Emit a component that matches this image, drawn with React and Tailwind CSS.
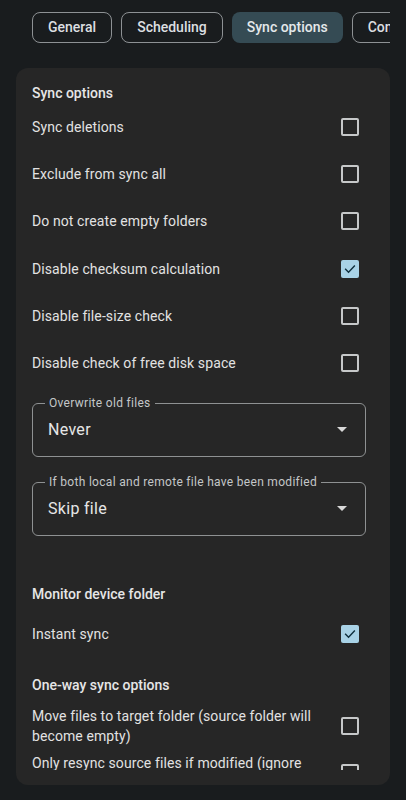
import React from "react";

function Check({ checked }) {
  if (checked) {
    return (
      <div className="w-[18px] h-[18px] rounded-[2px] bg-[#a8d2e6] flex items-center justify-center shrink-0">
        <svg width="14" height="14" viewBox="0 0 24 24" fill="none" stroke="#0e2f3d" strokeWidth="2.4" strokeLinecap="square">
          <path d="M4.5 12.5 L9.5 17.5 L19.5 7" />
        </svg>
      </div>
    );
  }
  return <div className="w-[18px] h-[18px] rounded-[2px] border-2 border-[#c6c8c9] shrink-0" />;
}

function Row({ label, checked, h = "h-[47.3px]" }) {
  return (
    <div className={`flex items-center ${h}`}>
      <div className="flex-1 text-[14px] leading-5 text-[#e2e2e2] tracking-[0.1px]">{label}</div>
      <div className="ml-2 mr-[15px]">
        <Check checked={checked} />
      </div>
    </div>
  );
}

function Select({ label, value, className = "" }) {
  return (
    <div className={`relative mr-2 h-[54px] rounded-[6px] border border-[#8e9192] flex items-center pl-[15px] pr-[18px] ${className}`}>
      <div className="absolute -top-[9px] left-3 px-1 bg-[#262626] text-[12px] leading-4 text-[#c4c7c8] tracking-[0.3px]">{label}</div>
      <div className="flex-1 text-[16px] leading-6 text-[#e6e6e6] tracking-[0.3px]">{value}</div>
      <svg width="10" height="5" viewBox="0 0 10 5">
        <path d="M0 0 L10 0 L5 5 Z" fill="#d8d8d8" />
      </svg>
    </div>
  );
}

export default function App() {
  const tabs = ["General", "Scheduling", "Sync options", "Conditions"];
  return (
    <div className="w-[406px] h-[800px] bg-[#191c1e] overflow-hidden flex flex-col" style={{ fontFamily: "Roboto, 'Noto Sans', sans-serif" }}>
      <div className="px-4 pt-3">
        <div className="overflow-hidden">
          <div className="flex gap-[9px] pl-4 w-max">
            {tabs.map((t, i) => (
              <div
                key={t}
                className={
                  i === 2
                    ? "h-[31px] px-[15px] rounded-[8px] bg-[#354b54] flex items-center text-[14px] font-medium text-[#e4e8ea]"
                    : "h-[31px] px-[15px] rounded-[8px] border border-[#8d9194] flex items-center text-[14px] font-medium text-[#dcdfe1]"
                }
              >
                {t}
              </div>
            ))}
          </div>
        </div>
      </div>

      <div className="mx-4 mt-[25px] h-[717px] rounded-xl bg-[#262626] pb-[15px] flex flex-col">
        <div className="flex-1 overflow-hidden px-4 pt-[15px]">
          <div className="h-5 text-[14px] leading-5 font-medium text-[#e6e6e6]">Sync options</div>
          <Row label="Sync deletions" />
          <Row label="Exclude from sync all" />
          <Row label="Do not create empty folders" />
          <Row label="Disable checksum calculation" checked />
          <Row label="Disable file-size check" />
          <Row label="Disable check of free disk space" />

          <Select className="mt-4" label="Overwrite old files" value="Never" />
          <Select className="mt-[25px]" label="If both local and remote file have been modified" value="Skip file" />

          <div className="mt-[48px] h-5 text-[14px] leading-5 font-medium text-[#e6e6e6]">Monitor device folder</div>
          <div className="mt-[7px]">
            <Row label="Instant sync" checked h="h-[47px]" />
          </div>

          <div className="mt-[17px] h-5 text-[14px] leading-5 font-medium text-[#e6e6e6]">One-way sync options</div>
          <div className="mt-[11px]">
            <Row label="Move files to target folder (source folder will become empty)" h="h-10" />
          </div>
          <div className="mt-[7px]">
            <Row label="Only resync source files if modified (ignore deleted target files)" h="h-10" />
          </div>
        </div>
      </div>
    </div>
  );
}
